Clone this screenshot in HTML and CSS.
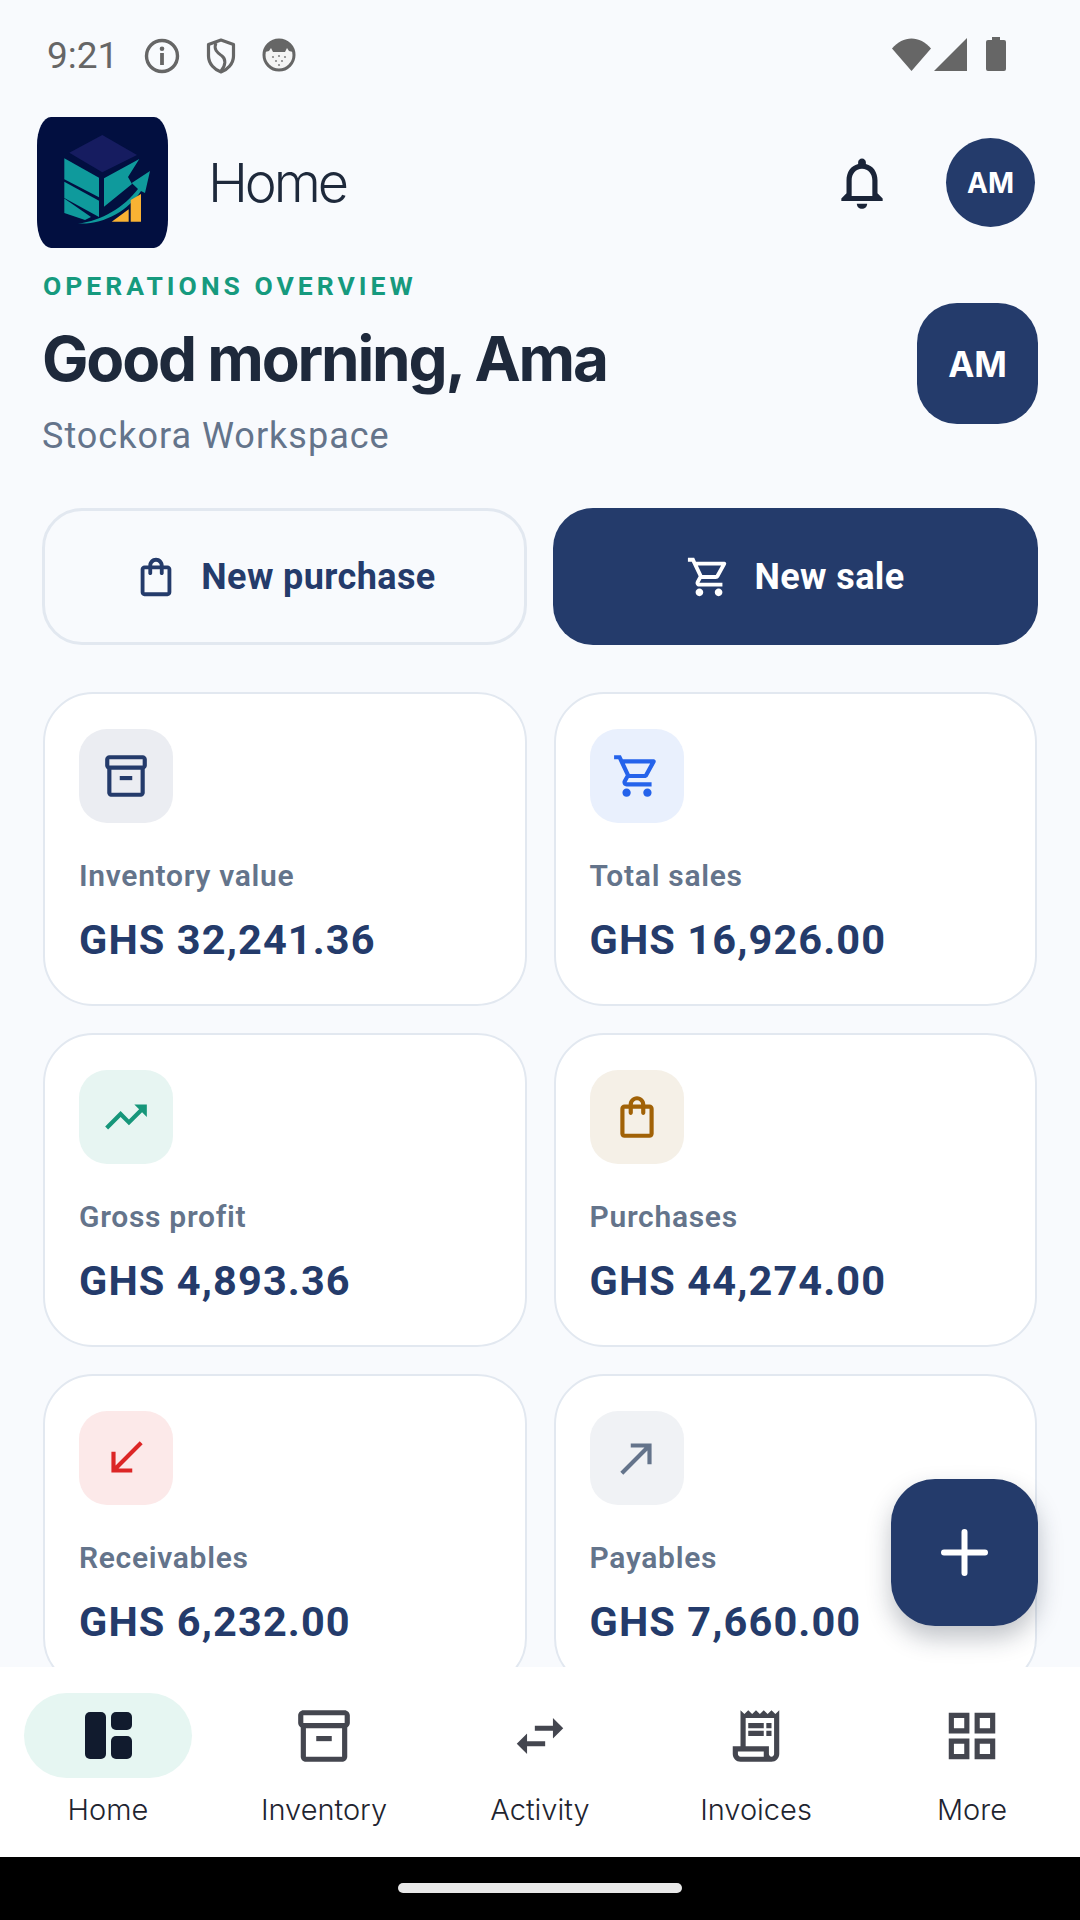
FILE: index.html
```html
<!DOCTYPE html>
<html lang="en">
<head>
<meta charset="utf-8">
<title>Stockora Home</title>
<link rel="stylesheet" href="styles.css">
</head>
<body>
<div class="phone">
  <div class="status">
    <div class="status-left">
      <span class="time">9:21</span>
      <svg class="st-info" viewBox="0 0 36 36"><circle cx="18" cy="18" r="15.5" fill="none" stroke="#666" stroke-width="3.4"/><circle cx="18" cy="10.8" r="2.3" fill="#666"/><rect x="16.1" y="15" width="3.8" height="12" fill="#666"/></svg>
      <svg class="st-shield" viewBox="0 0 30 36"><path d="M15 2 L27.5 6.5 V18 C27.5 26 21 32 15 34 C9 32 2.5 26 2.5 18 V6.5 Z" fill="none" stroke="#666" stroke-width="3.2" stroke-linejoin="round"/><path d="M10 5 C7 12 12 15 16 18 C20 21 20 27 15 33" fill="none" stroke="#666" stroke-width="3"/></svg>
      <svg class="st-cat" viewBox="0 0 34 34"><circle cx="17" cy="17" r="15" fill="#f4f4f4" stroke="#666" stroke-width="3"/><path d="M3 14 C4 6 10 1.5 17 1.5 C24 1.5 30 6 31 14 L27 13 L25 10 L23 14 L11 14 L9 10 L7 13 Z" fill="#666"/><g fill="#888"><circle cx="11" cy="19" r="1.1"/><circle cx="17" cy="18" r="1.1"/><circle cx="23" cy="19" r="1.1"/><circle cx="14" cy="23" r="1.1"/><circle cx="20" cy="23" r="1.1"/><circle cx="17" cy="27" r="1.1"/></g></svg>
    </div>
    <div class="status-right">
      <svg class="st-wifi" viewBox="0 0 39 33"><path d="M0 10.5 C11 -3 28 -3 39 10.5 L19.5 33 Z" fill="#666"/></svg>
      <svg class="st-signal" viewBox="0 0 33 33"><path d="M33 0 V33 H0 Z" fill="#666"/></svg>
      <svg class="st-battery" viewBox="0 0 20 34"><path d="M6 0 H14 V3 H18 Q20 3 20 5 V32 Q20 34 18 34 H2 Q0 34 0 32 V5 Q0 3 2 3 H6 Z" fill="#666"/></svg>
    </div>
  </div>

  <header class="appbar">
    <div class="logo">
      <svg viewBox="0 0 131 131">
        <path d="M65.3 18 L100 38 L65.3 55.3 L32.3 35.7 Z" fill="#161c60"/>
        <g fill="#0f9a9c">
          <path d="M27.3 41.3 L62 60.7 V80.3 L27.3 62.3 Z"/>
          <path d="M27.3 64.7 L62 83.7 V100 L27.3 81 Z"/>
          <path d="M27.3 81.5 L54 100 L48 103 L27.3 96 Z"/>
          <path d="M67 61.3 L102.3 42 L91 60 L95 67 L67 89.7 Z"/>
          <path d="M41 106.5 C65 104 87 90 101 72 L94.7 66 L113 54 L108 76 L104 74 C91 94 66 108 41 106.5 Z"/>
        </g>
        <g fill="#f9b233">
          <path d="M74.7 104.7 L91.7 92.3 V104.7 Z"/>
          <path d="M93.7 83 L104 77 V104.7 H93.7 Z"/>
        </g>
      </svg>
    </div>
    <h1 class="title">Home</h1>
    <svg class="bell" viewBox="0 0 24 24"><path d="M12 22c1.1 0 2-.9 2-2h-4c0 1.1.9 2 2 2zm6-6v-5c0-3.07-1.63-5.64-4.5-6.32V4c0-.83-.67-1.5-1.5-1.5s-1.5.67-1.5 1.5v.68C7.64 5.36 6 7.92 6 11v5l-2 2v1h16v-1l-2-2zm-2 1H8v-6c0-2.48 1.51-4.5 4-4.5s4 2.02 4 4.5v6z"/></svg>
    <div class="avatar">AM</div>
  </header>

  <main class="content">
    <section class="hero">
      <div class="hero-text">
        <div class="eyebrow">OPERATIONS OVERVIEW</div>
        <h2 class="greeting">Good morning, Ama</h2>
        <div class="workspace">Stockora Workspace</div>
      </div>
      <div class="tile">AM</div>
    </section>

    <section class="actions">
      <button class="btn btn-outline">
        <svg viewBox="0 0 24 24"><path d="M18 6h-2c0-2.21-1.79-4-4-4S8 3.79 8 6H6c-1.1 0-2 .9-2 2v12c0 1.1.9 2 2 2h12c1.1 0 2-.9 2-2V8c0-1.1-.9-2-2-2zm-6-2c1.1 0 2 .9 2 2h-4c0-1.1.9-2 2-2zm6 16H6V8h2v2c0 .55.45 1 1 1s1-.45 1-1V8h4v2c0 .55.45 1 1 1s1-.45 1-1V8h2v12z"/></svg>
        <span>New purchase</span>
      </button>
      <button class="btn btn-solid">
        <svg viewBox="0 0 24 24"><path d="M15.55 13c.75 0 1.41-.41 1.75-1.03l3.58-6.49c.37-.66-.11-1.48-.87-1.48H5.21l-.94-2H1v2h2l3.6 7.59-1.35 2.44C4.52 15.37 5.48 17 7 17h12v-2H7l1.1-2h7.45zM6.16 6h12.15l-2.76 5H8.53L6.16 6zM7 18c-1.1 0-1.99.9-1.99 2S5.9 22 7 22s2-.9 2-2-.9-2-2-2zm10 0c-1.1 0-1.99.9-1.99 2s.89 2 1.99 2 2-.9 2-2-.9-2-2-2z"/></svg>
        <span>New sale</span>
      </button>
    </section>

    <section class="cards">
      <article class="card">
        <div class="chip chip-navy"><svg viewBox="0 0 24 24"><path d="M20 2H4c-1 0-2 .9-2 2v3.01c0 .72.43 1.34 1 1.69V20c0 1.1 1.1 2 2 2h14c.9 0 2-.9 2-2V8.7c.57-.35 1-.97 1-1.69V4c0-1.1-1-2-2-2zm-1 18H5V9h14v11zm1-13H4V4h16v3z"/><path d="M9 12h6v2H9z"/></svg></div>
        <div class="label">Inventory value</div>
        <div class="value">GHS 32,241.36</div>
      </article>
      <article class="card">
        <div class="chip chip-blue"><svg viewBox="0 0 24 24"><path d="M15.55 13c.75 0 1.41-.41 1.75-1.03l3.58-6.49c.37-.66-.11-1.48-.87-1.48H5.21l-.94-2H1v2h2l3.6 7.59-1.35 2.44C4.52 15.37 5.48 17 7 17h12v-2H7l1.1-2h7.45zM6.16 6h12.15l-2.76 5H8.53L6.16 6zM7 18c-1.1 0-1.99.9-1.99 2S5.9 22 7 22s2-.9 2-2-.9-2-2-2zm10 0c-1.1 0-1.99.9-1.99 2s.89 2 1.99 2 2-.9 2-2-.9-2-2-2z"/></svg></div>
        <div class="label">Total sales</div>
        <div class="value">GHS 16,926.00</div>
      </article>
      <article class="card">
        <div class="chip chip-green"><svg viewBox="0 0 24 24"><path d="M16 6l2.29 2.29-4.88 4.88-4-4L2 16.59 3.41 18l6-6 4 4 6.3-6.29L22 12V6z"/></svg></div>
        <div class="label">Gross profit</div>
        <div class="value">GHS 4,893.36</div>
      </article>
      <article class="card">
        <div class="chip chip-amber"><svg viewBox="0 0 24 24"><path d="M18 6h-2c0-2.21-1.79-4-4-4S8 3.79 8 6H6c-1.1 0-2 .9-2 2v12c0 1.1.9 2 2 2h12c1.1 0 2-.9 2-2V8c0-1.1-.9-2-2-2zm-6-2c1.1 0 2 .9 2 2h-4c0-1.1.9-2 2-2zm6 16H6V8h2v2c0 .55.45 1 1 1s1-.45 1-1V8h4v2c0 .55.45 1 1 1s1-.45 1-1V8h2v12z"/></svg></div>
        <div class="label">Purchases</div>
        <div class="value">GHS 44,274.00</div>
      </article>
      <article class="card">
        <div class="chip chip-red"><svg viewBox="0 0 24 24"><path d="M15 19v-2H8.41L20 5.41 18.59 4 7 15.59V9H5v10h10z"/></svg></div>
        <div class="label">Receivables</div>
        <div class="value">GHS 6,232.00</div>
      </article>
      <article class="card">
        <div class="chip chip-slate"><svg viewBox="0 0 24 24"><path d="M9 5v2h6.59L4 18.59 5.41 20 17 8.41V15h2V5z"/></svg></div>
        <div class="label">Payables</div>
        <div class="value">GHS 7,660.00</div>
      </article>
    </section>
  </main>

  <button class="fab" aria-label="Add"><svg viewBox="0 0 47 47"><path d="M23.5 3 V44 M3 23.5 H44" fill="none" stroke="#fff" stroke-width="6" stroke-linecap="round"/></svg></button>

  <nav class="nav">
    <div class="nav-item nav-active">
      <div class="nav-icon">
        <svg class="dash" viewBox="0 0 47 47"><rect x="0" y="0" width="21" height="47" rx="5"/><rect x="26" y="0" width="21" height="18" rx="5"/><rect x="26" y="24" width="21" height="23" rx="5"/></svg>
      </div>
      <span>Home</span>
    </div>
    <div class="nav-item">
      <div class="nav-icon"><svg viewBox="0 0 24 24"><path d="M20 2H4c-1 0-2 .9-2 2v3.01c0 .72.43 1.34 1 1.69V20c0 1.1 1.1 2 2 2h14c.9 0 2-.9 2-2V8.7c.57-.35 1-.97 1-1.69V4c0-1.1-1-2-2-2zm-1 18H5V9h14v11zm1-13H4V4h16v3z"/><path d="M9 12h6v2H9z"/></svg></div>
      <span>Inventory</span>
    </div>
    <div class="nav-item">
      <div class="nav-icon"><svg viewBox="0 0 24 24"><path d="M6.99 11L3 15l3.99 4v-3H14v-2H6.99v-3zM21 9l-3.99-4v3H10v2h7.01v3L21 9z"/></svg></div>
      <span>Activity</span>
    </div>
    <div class="nav-item">
      <div class="nav-icon"><svg viewBox="0 0 24 24"><path d="M19.5 3.5L18 2l-1.5 1.5L15 2l-1.5 1.5L12 2l-1.5 1.5L9 2 7.5 3.5 6 2v14H3v3c0 1.66 1.34 3 3 3h12c1.66 0 3-1.34 3-3V2l-1.5 1.5zM15 20H6c-.55 0-1-.45-1-1v-1h10v2zm4-1c0 .55-.45 1-1 1s-1-.45-1-1v-3H8V5h11v14z"/><path d="M9 7h6v2H9zm7 0h2v2h-2zm-7 3h6v2H9zm7 0h2v2h-2z"/></svg></div>
      <span>Invoices</span>
    </div>
    <div class="nav-item">
      <div class="nav-icon"><svg viewBox="0 0 24 24"><path d="M3 3v8h8V3H3zm6 6H5V5h4v4zm-6 4v8h8v-8H3zm6 6H5v-4h4v4zm4-16v8h8V3h-8zm6 6h-4V5h4v4zm-6 4v8h8v-8h-8zm6 6h-4v-4h4v4z"/></svg></div>
      <span>More</span>
    </div>
  </nav>

  <div class="gesture"><div class="handle"></div></div>
</div>
</body>
</html>
```

FILE: styles.css
```css
* { box-sizing: border-box; margin: 0; padding: 0; }
html, body { width: 1080px; height: 1920px; overflow: hidden; }
body { background: #f8fafd; font-family: "Roboto", sans-serif; }
svg { display: block; flex: none; }
button { font: inherit; border: 0; background: none; }

.phone { position: relative; width: 1080px; height: 1920px; display: flex; flex-direction: column; overflow: hidden; background: #f8fafd; }

/* status bar */
.status { height: 117px; flex: none; display: flex; justify-content: space-between; padding: 37px 74px 0 47px; }
.status-left { display: flex; align-items: flex-start; }
.time { font-size: 37px; line-height: 38px; color: #666; width: 97px; }
.st-info { width: 36px; height: 36px; margin-top: 1px; margin-right: 26px; }
.st-shield { width: 30px; height: 36px; margin-top: 1px; margin-right: 26px; }
.st-cat { width: 34px; height: 34px; margin-top: 1px; }
.status-right { display: flex; align-items: flex-start; }
.st-wifi { width: 39px; height: 33px; margin-top: 1px; margin-right: 3px; }
.st-signal { width: 33px; height: 33px; margin-top: 1px; margin-right: 19px; }
.st-battery { width: 20px; height: 34px; }

/* app bar */
.appbar { height: 131px; flex: none; display: flex; align-items: center; padding: 0 45px 0 37px; }
.logo { width: 131px; height: 131px; border-radius: 14px / 28px; background: #020f40; overflow: hidden; flex: none; }
.logo svg { width: 131px; height: 131px; }
.title { margin-left: 40px; flex: 1; font-family: "Inter", sans-serif; font-weight: 300; font-size: 54px; letter-spacing: -3.1px; color: #1e293b; }
.bell { width: 62px; height: 64px; fill: #1a2438; margin-right: 53px; }
.avatar { width: 89px; height: 89px; border-radius: 50%; background: #243b6b; color: #fff; display: flex; align-items: center; justify-content: center; font-family: "Inter", sans-serif; font-weight: 700; font-size: 28px; }

/* content */
.content { flex: 1; min-height: 0; overflow: hidden; padding: 0 42px; }
.hero { display: flex; justify-content: space-between; align-items: flex-start; height: 260px; }
.hero-text { padding-top: 23px; }
.eyebrow { margin-left: 1px; font-weight: 700; font-size: 26.5px; line-height: 30px; letter-spacing: 4px; color: #169a7e; }
.greeting { margin-top: 22px; font-family: "Inter", sans-serif; font-weight: 700; font-size: 62px; line-height: 72px; letter-spacing: -2.2px; color: #1e293b; }
.workspace { margin-top: 20px; font-size: 36px; line-height: 42px; letter-spacing: 1px; color: #64748b; }
.tile { margin-top: 55px; width: 121px; height: 121px; border-radius: 40px; background: #243b6b; color: #fff; display: flex; align-items: center; justify-content: center; font-family: "Inter", sans-serif; font-weight: 700; font-size: 35px; }

.actions { display: grid; grid-template-columns: 1fr 1fr; gap: 26px; }
.btn { height: 137px; border-radius: 40px; display: flex; align-items: center; justify-content: center; gap: 22px; font-weight: 700; font-size: 36px; letter-spacing: .4px; }
.btn svg { width: 46px; height: 46px; fill: currentColor; }
.btn-outline { border: 3px solid #e2e8f0; color: #243b6b; }
.btn-solid { background: #243b6b; color: #fff; }

.cards { margin-top: 47px; padding: 0 1px; display: grid; grid-template-columns: 1fr 1fr; column-gap: 27px; row-gap: 27px; }
.card { height: 314px; background: #fff; border: 2.5px solid #e2e8f0; border-radius: 50px; padding: 35px 34px 0; }
.chip { width: 94px; height: 94px; border-radius: 28px; display: flex; align-items: center; justify-content: center; }
.chip svg { width: 50px; height: 50px; fill: currentColor; }
.chip-navy { background: #ebedf2; color: #243b6b; }
.chip-blue { background: #e9f0fd; color: #2563eb; }
.chip-green { background: #e7f5f2; color: #16967a; }
.chip-amber { background: #f5f0e7; color: #a16207; }
.chip-red { background: #fce9e9; color: #dc2626; }
.chip-slate { background: #f0f2f5; color: #64748b; }
.label { margin-top: 35px; font-weight: 600; font-size: 30px; line-height: 36px; letter-spacing: .7px; color: #64748b; }
.value { margin-top: 22px; font-weight: 700; font-size: 41.5px; line-height: 48px; letter-spacing: 1.1px; color: #243b6b; }

/* floating action */
.fab { position: absolute; left: 891px; top: 1479px; width: 147px; height: 147px; border-radius: 44px; background: #243b6b; display: flex; align-items: center; justify-content: center; box-shadow: 0 12px 24px rgba(30, 41, 59, .28); }
.fab svg { width: 47px; height: 47px; }

/* bottom nav */
.nav { height: 190px; flex: none; background: #fff; display: grid; grid-template-columns: repeat(5, 216px); }
.nav-item { display: flex; flex-direction: column; align-items: center; padding-top: 26px; font-family: "Inter", sans-serif; font-weight: 300; font-size: 29px; line-height: 36px; color: #1e2430; }
.nav-icon { width: 168px; height: 85px; border-radius: 43px; display: flex; align-items: center; justify-content: center; margin-bottom: 14px; }
.nav-icon svg { width: 62px; height: 62px; fill: #44464f; }
.nav-active .nav-icon { background: #e6f6f2; }
.nav-icon .dash { width: 47px; height: 47px; fill: #111b2e; }

.gesture { height: 63px; flex: none; background: #000; display: flex; justify-content: center; padding-top: 26px; }
.handle { width: 284px; height: 10px; border-radius: 5px; background: #e8e8e8; }
```
